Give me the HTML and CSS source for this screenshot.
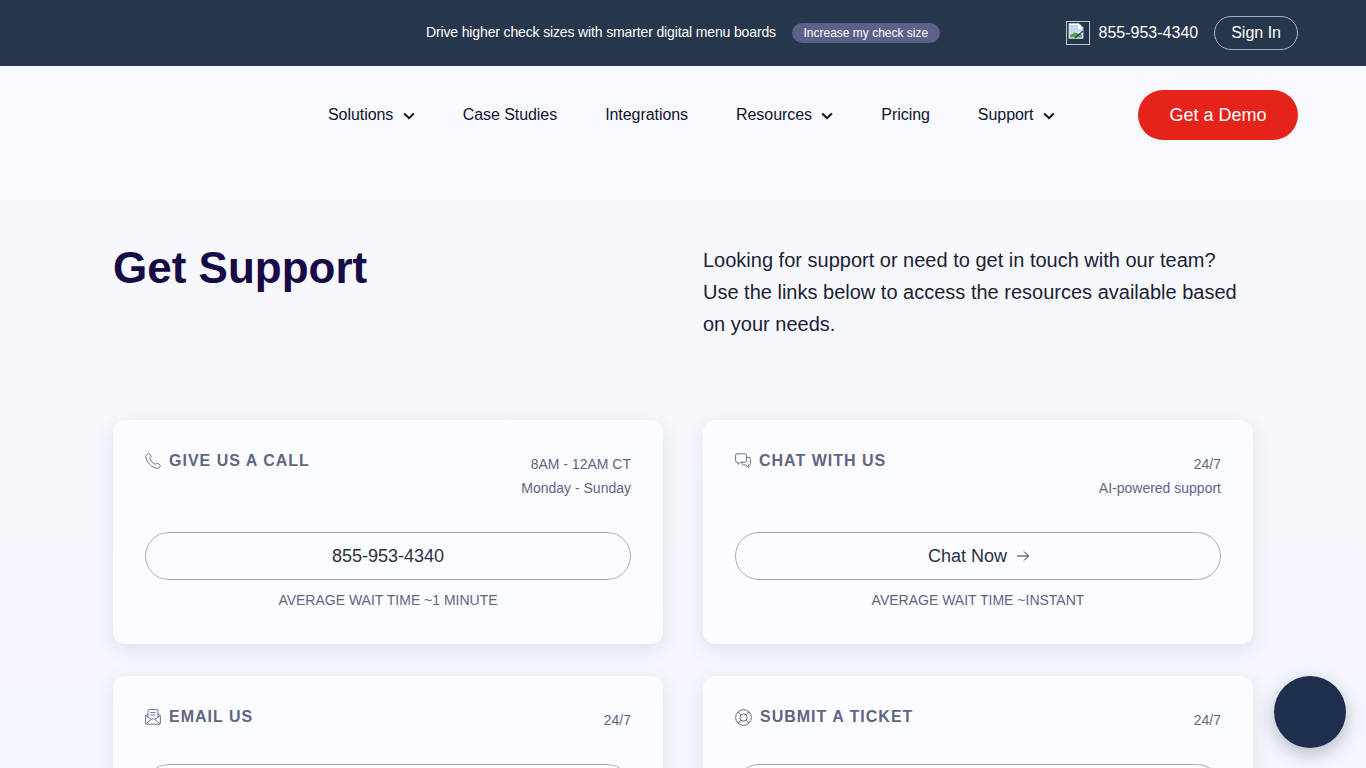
FILE: index.html
```html
<!DOCTYPE html>
<html lang="en">
<head>
    <meta charset="UTF-8">
    <meta name="viewport" content="width=device-width, initial-scale=1.0">
    <title>Get Support</title>
    <link rel="stylesheet" href="styles.css">
</head>
<body>

<div class="topbar">
    <div class="promo">
        <span class="promo-text">Drive higher check sizes with smarter digital menu boards</span>
        <a class="promo-btn" href="#">Increase my check size</a>
    </div>
    <div class="topbar-right">
        <a class="phone" href="#">
            <span class="broken-img">
                <svg width="16" height="16" viewBox="0 0 16 16">
                    <path d="M1 0.5H11L15 4.5V15.5H1Z" fill="#fff" stroke="#b9bec6"/>
                    <path d="M2 2H10V6H14V8L2 12Z" fill="#c5d6f2"/>
                    <path d="M2 14.5V12L7 9.5L14 11.5V14.5Z" fill="#5d9e48"/>
                    <path d="M7 15L15 8" stroke="#1f3f8f" stroke-width="1.4"/>
                </svg>
            </span>
            855-953-4340
        </a>
        <a class="signin" href="#">Sign In</a>
    </div>
</div>

<nav class="mainnav">
    <ul class="nav-links">
        <li>Solutions <svg class="chev" width="12" height="8" viewBox="0 0 12 8"><path d="M1.2 1.5L6 6.2L10.8 1.5" fill="none" stroke="#10122e" stroke-width="2"/></svg></li>
        <li>Case Studies</li>
        <li>Integrations</li>
        <li>Resources <svg class="chev" width="12" height="8" viewBox="0 0 12 8"><path d="M1.2 1.5L6 6.2L10.8 1.5" fill="none" stroke="#10122e" stroke-width="2"/></svg></li>
        <li>Pricing</li>
        <li>Support <svg class="chev" width="12" height="8" viewBox="0 0 12 8"><path d="M1.2 1.5L6 6.2L10.8 1.5" fill="none" stroke="#10122e" stroke-width="2"/></svg></li>
    </ul>
    <a class="demo-btn" href="#">Get a Demo</a>
</nav>

<main class="content">
    <section class="hero">
        <h1>Get Support</h1>
        <p>Looking for support or need to get in touch with our team? Use the links below to access the resources available based on your needs.</p>
    </section>

    <section class="cards">
        <div class="card">
            <div class="card-head">
                <h2>
                    <svg class="icon" width="16" height="16" viewBox="0 0 16 16"><path d="M1.6 1.9L3.4 0.6C3.8 0.4 4.2 0.5 4.4 0.8L6 3.3C6.2 3.6 6.1 4 5.9 4.2L4.9 5.2C5.3 7.8 8 10.7 10.6 11.3L11.7 10.2C12 10 12.4 9.9 12.7 10.2L15.1 11.9C15.4 12.2 15.5 12.6 15.2 13L13.9 14.7C13.5 15.3 12.9 15.5 12.2 15.4C6.8 14.5 1.6 9.2 0.7 3.7C0.6 3 0.9 2.3 1.6 1.9Z" fill="none" stroke="#5f6583" stroke-width="0.9"/></svg>
                    GIVE US A CALL
                </h2>
                <div class="hours">8AM - 12AM CT<br>Monday - Sunday</div>
            </div>
            <a class="pill" href="#">855-953-4340</a>
            <div class="wait">AVERAGE WAIT TIME ~1 MINUTE</div>
        </div>

        <div class="card">
            <div class="card-head">
                <h2>
                    <svg class="icon" width="16" height="16" viewBox="0 0 16 16"><path d="M1.8 0.8H10.2C10.9 0.8 11.4 1.3 11.4 2V8C11.4 8.7 10.9 9.2 10.2 9.2H5.4L3 11.4V9.2H1.8C1.1 9.2 0.6 8.7 0.6 8V2C0.6 1.3 1.1 0.8 1.8 0.8Z" fill="none" stroke="#5f6583" stroke-width="0.9"/><path d="M11.4 4.4H14.2C14.9 4.4 15.4 4.9 15.4 5.6V10.8C15.4 11.5 14.9 12 14.2 12H13.6V14.6L11 12H8.2C7.6 12 7.1 11.6 7 11V9.2" fill="none" stroke="#5f6583" stroke-width="0.9"/></svg>
                    CHAT WITH US
                </h2>
                <div class="hours">24/7<br>AI-powered support</div>
            </div>
            <a class="pill" href="#">Chat Now
                <svg class="arrow" width="14" height="12" viewBox="0 0 14 12"><path d="M1 6H12.5M8 1.5L12.5 6L8 10.5" fill="none" stroke="#2b2f45" stroke-width="1"/></svg>
            </a>
            <div class="wait">AVERAGE WAIT TIME ~INSTANT</div>
        </div>

        <div class="card">
            <div class="card-head">
                <h2>
                    <svg class="icon" width="16" height="16" viewBox="0 0 16 16"><path d="M0.6 6.6V14.2C0.6 14.8 1 15.2 1.6 15.2H14.4C15 15.2 15.4 14.8 15.4 14.2V6.6L13 4.9M3 4.9L0.6 6.6L6.4 10.6M15.4 6.6L9.6 10.6M0.8 14.8L6.6 10.2C7.4 9.6 8.6 9.6 9.4 10.2L15.2 14.8" fill="none" stroke="#5f6583" stroke-width="0.9"/><path d="M3 8.2V1.6C3 1 3.4 0.6 4 0.6H12C12.6 0.6 13 1 13 1.6V8.2M5.4 3.6H10.6M5.4 6H10.6" fill="none" stroke="#5f6583" stroke-width="0.9"/></svg>
                    EMAIL US
                </h2>
                <div class="hours">24/7</div>
            </div>
            <a class="pill" href="#"></a>
        </div>

        <div class="card">
            <div class="card-head">
                <h2>
                    <svg class="icon" width="17" height="17" viewBox="0 0 16 16"><circle cx="8" cy="8" r="7.4" fill="none" stroke="#5f6583" stroke-width="0.9"/><circle cx="8" cy="8" r="3.4" fill="none" stroke="#5f6583" stroke-width="0.9"/><path d="M3 2.8L5.6 5.5M13 2.8L10.4 5.5M3 13.2L5.6 10.5M13 13.2L10.4 10.5" fill="none" stroke="#5f6583" stroke-width="0.9"/></svg>
                    SUBMIT A TICKET
                </h2>
                <div class="hours">24/7</div>
            </div>
            <a class="pill" href="#"></a>
        </div>
    </section>
</main>

<div class="chat-bubble"></div>

</body>
</html>
```

FILE: styles.css
```css
html, body {
    height: 768px;
    overflow: hidden;
}
body {
    font-family: "Liberation Sans", Arial, sans-serif;
    margin: 0;
    padding: 0;
    background: linear-gradient(180deg, #f9fafe 0%, #f6f8fd 35%, #f3f6fc 100%);
    color: #1c2133;
}
a {
    color: inherit;
    text-decoration: none;
}

/* top strip */
.topbar {
    height: 66px;
    background-color: #26364c;
    color: #fff;
    display: flex;
    align-items: center;
    justify-content: space-between;
    padding: 0 68px 0 426px;
}
.promo {
    display: flex;
    align-items: center;
    gap: 16px;
}
.promo-text {
    font-size: 14px;
    letter-spacing: -0.14px;
    margin-bottom: 2px;
}
.promo-btn {
    background-color: #5d6088;
    font-size: 12px;
    line-height: 20px;
    padding: 0 11.5px;
    border-radius: 10px;
}
.topbar-right {
    display: flex;
    align-items: center;
    gap: 16px;
}
.phone {
    display: flex;
    align-items: center;
    gap: 9px;
    font-size: 16px;
}
.broken-img {
    width: 24px;
    height: 24px;
    box-sizing: border-box;
    border: 1px solid #c3c8cf;
    display: flex;
    padding: 1px 0 0 1px;
}
.signin {
    font-size: 16px;
    line-height: 32px;
    padding: 0 16px;
    border: 1px solid #aab2c0;
    border-radius: 17px;
}

/* main nav */
.mainnav {
    display: flex;
    align-items: center;
    justify-content: space-between;
    padding: 24px 68px 24px 328px;
}
.nav-links {
    display: flex;
    gap: 48px;
    list-style: none;
    margin: 0;
    padding: 0;
    font-size: 16px;
    letter-spacing: -0.06px;
    color: #10122e;
}
.chev {
    margin-left: 5px;
    vertical-align: 0;
}
.demo-btn {
    width: 160px;
    height: 50px;
    line-height: 50px;
    text-align: center;
    background-color: #e5231b;
    color: #fff;
    font-size: 18px;
    border-radius: 25px;
}

/* page content */
.content {
    width: 1140px;
    margin: 0 auto 0 113px;
}
.hero {
    display: grid;
    grid-template-columns: 550px 550px;
    column-gap: 40px;
    height: 256px;
    box-sizing: border-box;
    padding-top: 80px;
}
.hero h1 {
    margin: -1px 0 0;
    font-size: 44px;
    line-height: 50px;
    color: #170a45;
}
.hero p {
    margin: 0;
    font-size: 20px;
    line-height: 32px;
    color: #1c2133;
}
.cards {
    display: grid;
    grid-template-columns: 550px 550px;
    column-gap: 40px;
    row-gap: 32px;
}
.card {
    background-color: #fbfcff;
    border-radius: 12px;
    padding: 32px;
    box-shadow: 0 6px 20px rgba(40, 50, 90, 0.1);
}
.card-head {
    display: flex;
    justify-content: space-between;
    margin-bottom: 32px;
}
.card h2 {
    display: flex;
    align-items: center;
    gap: 8px;
    margin: 1px 0 0;
    height: 16px;
    font-size: 16px;
    line-height: 16px;
    letter-spacing: 1px;
    color: #5f6583;
}
.icon {
    flex: none;
}
.hours {
    font-size: 14px;
    line-height: 24px;
    text-align: right;
    color: #5f6583;
}
.pill {
    display: flex;
    align-items: center;
    justify-content: center;
    gap: 9px;
    height: 48px;
    box-sizing: border-box;
    border: 1px solid #a9adb9;
    border-radius: 24px;
    font-size: 18px;
    color: #2b2f45;
}
.arrow {
    margin-right: -2px;
}
.wait {
    margin-top: 8px;
    font-size: 14px;
    line-height: 24px;
    text-align: center;
    color: #5f6583;
}

.chat-bubble {
    position: fixed;
    right: 20px;
    bottom: 20px;
    width: 72px;
    height: 72px;
    border-radius: 50%;
    background-color: #1e2f4d;
    box-shadow: 0 6px 18px rgba(30, 47, 77, 0.3);
}
```
